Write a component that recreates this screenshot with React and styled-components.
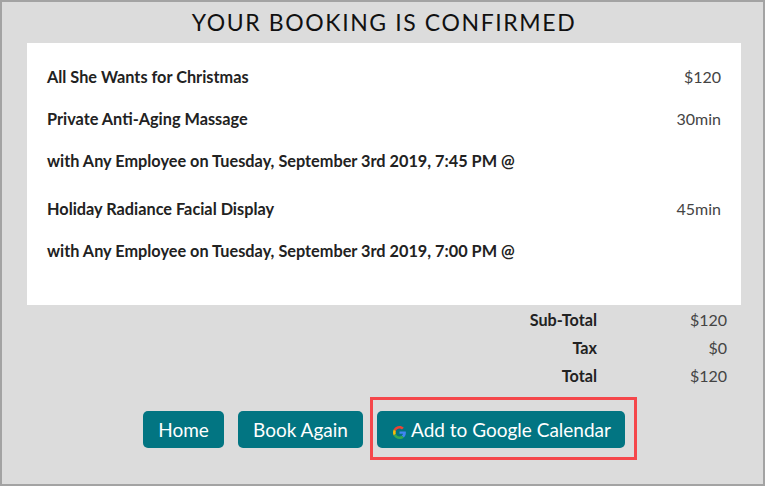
import React from 'react';
import styled, { createGlobalStyle } from 'styled-components';

const GlobalStyle = createGlobalStyle`
  html, body { margin: 0; padding: 0; background: #dcdcdc; }
  body { font-family: 'Lato', 'Liberation Sans', sans-serif; }
`;

const Frame = styled.div`
  box-sizing: border-box;
  width: 765px;
  height: 486px;
  border: 2px solid #a3a3a3;
  background: #dcdcdc;
  padding: 0 22px 0 25px;
`;

const Title = styled.h1`
  margin: 0;
  height: 41px;
  line-height: 41px;
  font-size: 23px;
  font-weight: 400;
  letter-spacing: 1.6px;
  text-align: center;
  color: #111;
`;

const Card = styled.div`
  box-sizing: border-box;
  width: 714px;
  height: 262px;
  background: #fff;
  padding: 12px 20px 0;
`;

const Row = styled.div`
  display: flex;
  justify-content: space-between;
  align-items: center;
  height: 42px;
  margin-bottom: ${(p) => p.$gap || 0}px;
  font-size: 16.3px;
  font-weight: 700;
  color: #222;
`;

const Amount = styled.span`
  font-size: 16px;
  font-weight: 400;
  color: #444;
`;

const Totals = styled.div`
  display: grid;
  grid-template-columns: 570px 130px;
  grid-auto-rows: 28px;
  align-items: center;
  margin-bottom: 22px;
  font-size: 16.2px;
`;

const TotalLabel = styled.div`
  font-weight: 700;
  text-align: right;
  color: #222;
`;

const TotalValue = styled.div`
  font-size: 16px;
  text-align: right;
  color: #444;
`;

const Buttons = styled.div`
  display: flex;
  gap: 14px;
  padding-left: 116px;
`;

const Button = styled.a`
  position: relative;
  display: flex;
  align-items: center;
  justify-content: center;
  gap: 5px;
  box-sizing: border-box;
  width: ${(p) => p.$width}px;
  height: 37px;
  border-radius: 5px;
  background: #027582;
  color: #fff;
  font-size: 19px;
  ${(p) => p.$highlight && `
    &::after {
      content: '';
      position: absolute;
      inset: -14px -12px -12px -7px;
      border: 3px solid #f5474b;
    }
  `}
`;

const GoogleIcon = styled.svg`
  flex: none;
  margin: 6px 0 0 2px;
`;

export default function App() {
  return (
    <>
      <GlobalStyle />
      <Frame>
        <Title>YOUR BOOKING IS CONFIRMED</Title>
        <Card>
          <Row>
            <span>All She Wants for Christmas</span>
            <Amount>$120</Amount>
          </Row>
          <Row>
            <span>Private Anti-Aging Massage</span>
            <Amount>30min</Amount>
          </Row>
          <Row $gap={6}>
            <span>with Any Employee on Tuesday, September 3rd 2019, 7:45 PM @</span>
          </Row>
          <Row>
            <span>Holiday Radiance Facial Display</span>
            <Amount>45min</Amount>
          </Row>
          <Row>
            <span>with Any Employee on Tuesday, September 3rd 2019, 7:00 PM @</span>
          </Row>
        </Card>
        <Totals>
          <TotalLabel>Sub-Total</TotalLabel>
          <TotalValue>$120</TotalValue>
          <TotalLabel>Tax</TotalLabel>
          <TotalValue>$0</TotalValue>
          <TotalLabel>Total</TotalLabel>
          <TotalValue>$120</TotalValue>
        </Totals>
        <Buttons>
          <Button $width={81}>Home</Button>
          <Button $width={125}>Book Again</Button>
          <Button $width={248} $highlight>
            <GoogleIcon width="13" height="13" viewBox="0 0 48 48">
              <path fill="#EA4335" d="M24 9.500c3.500 0 6.700 1.300 9.100 3.500l6.800-6.800C35.800 2.400 30.300 0 24 0 14.600 0 6.500 5.400 2.600 13.200l7.900 6.100C12.400 13.600 17.700 9.500 24 9.500z" />
              <path fill="#4285F4" d="M47.500 24.500c0-1.600-.1-3.100-.4-4.500H24v9h13.200c-.6 3-2.300 5.500-4.800 7.200l7.700 6c4.500-4.200 7.400-10.300 7.400-17.700z" />
              <path fill="#FBBC05" d="M10.500 28.700c-.5-1.400-.8-3-.8-4.700s.3-3.300.8-4.700l-7.900-6.100C.9 16.500 0 20.100 0 24s.9 7.500 2.600 10.800l7.900-6.100z" />
              <path fill="#34A853" d="M24 48c6.500 0 11.900-2.100 15.900-5.800l-7.700-6c-2.200 1.400-4.900 2.300-8.200 2.300-6.300 0-11.600-4.200-13.500-9.800l-7.900 6.100C6.500 42.600 14.600 48 24 48z" />
            </GoogleIcon>
            Add to Google Calendar
          </Button>
        </Buttons>
      </Frame>
    </>
  );
}
